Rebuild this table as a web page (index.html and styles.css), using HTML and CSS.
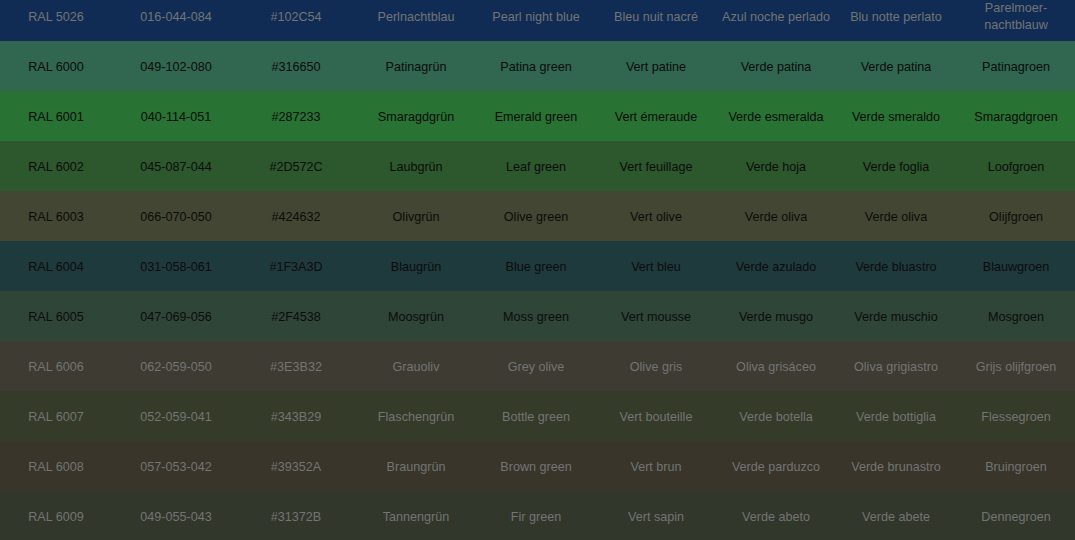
FILE: index.html
```html
<!DOCTYPE html>
<html>
<head>
<meta charset="utf-8">
<link rel="stylesheet" href="styles.css">
</head>
<body>
<div class="wrap">
<table class="ral">
<tbody>
<tr class="r5026 dim"><td>RAL 5026</td><td>016-044-084</td><td>#102C54</td><td>Perlnachtblau</td><td>Pearl night blue</td><td>Bleu nuit nacré</td><td>Azul noche perlado</td><td>Blu notte perlato</td><td>Parelmoer-nachtblauw</td></tr>
<tr class="r6000"><td>RAL 6000</td><td>049-102-080</td><td>#316650</td><td>Patinagrün</td><td>Patina green</td><td>Vert patine</td><td>Verde patina</td><td>Verde patina</td><td>Patinagroen</td></tr>
<tr class="r6001"><td>RAL 6001</td><td>040-114-051</td><td>#287233</td><td>Smaragdgrün</td><td>Emerald green</td><td>Vert émeraude</td><td>Verde esmeralda</td><td>Verde smeraldo</td><td>Smaragdgroen</td></tr>
<tr class="r6002"><td>RAL 6002</td><td>045-087-044</td><td>#2D572C</td><td>Laubgrün</td><td>Leaf green</td><td>Vert feuillage</td><td>Verde hoja</td><td>Verde foglia</td><td>Loofgroen</td></tr>
<tr class="r6003"><td>RAL 6003</td><td>066-070-050</td><td>#424632</td><td>Olivgrün</td><td>Olive green</td><td>Vert olive</td><td>Verde oliva</td><td>Verde oliva</td><td>Olijfgroen</td></tr>
<tr class="r6004"><td>RAL 6004</td><td>031-058-061</td><td>#1F3A3D</td><td>Blaugrün</td><td>Blue green</td><td>Vert bleu</td><td>Verde azulado</td><td>Verde bluastro</td><td>Blauwgroen</td></tr>
<tr class="r6005"><td>RAL 6005</td><td>047-069-056</td><td>#2F4538</td><td>Moosgrün</td><td>Moss green</td><td>Vert mousse</td><td>Verde musgo</td><td>Verde muschio</td><td>Mosgroen</td></tr>
<tr class="r6006 dim"><td>RAL 6006</td><td>062-059-050</td><td>#3E3B32</td><td>Grauoliv</td><td>Grey olive</td><td>Olive gris</td><td>Oliva grisáceo</td><td>Oliva grigiastro</td><td>Grijs olijfgroen</td></tr>
<tr class="r6007 dim"><td>RAL 6007</td><td>052-059-041</td><td>#343B29</td><td>Flaschengrün</td><td>Bottle green</td><td>Vert bouteille</td><td>Verde botella</td><td>Verde bottiglia</td><td>Flessegroen</td></tr>
<tr class="r6008 dim"><td>RAL 6008</td><td>057-053-042</td><td>#39352A</td><td>Braungrün</td><td>Brown green</td><td>Vert brun</td><td>Verde parduzco</td><td>Verde brunastro</td><td>Bruingroen</td></tr>
<tr class="r6009 dim"><td>RAL 6009</td><td>049-055-043</td><td>#31372B</td><td>Tannengrün</td><td>Fir green</td><td>Vert sapin</td><td>Verde abeto</td><td>Verde abete</td><td>Dennegroen</td></tr>
</tbody>
</table>
</div>
</body>
</html>
```
FILE: styles.css
```css
html, body {
  margin: 0;
  padding: 0;
  background: #31372B;
  overflow: hidden;
}
.wrap {
  margin-top: -9px;
  margin-left: -4px;
  width: 1080px;
}
.ral {
  width: 100%;
  border-collapse: collapse;
  table-layout: fixed;
  font-family: "Liberation Sans", Arial, sans-serif;
  font-size: 12.6px;
  color: #0c0c0c;
}
.ral td {
  height: 48px;
  padding: 2px 1px 0;
  text-align: center;
  vertical-align: middle;
  line-height: 17px;
}
.ral tr.dim { color: #747474; }
.r5026 { background: #102C54; }
.r6000 { background: #316650; }
.r6001 { background: #287233; }
.r6002 { background: #2D572C; }
.r6003 { background: #424632; }
.r6004 { background: #1F3A3D; }
.r6005 { background: #2F4538; }
.r6006 { background: #3E3B32; }
.r6007 { background: #343B29; }
.r6008 { background: #39352A; }
.r6009 { background: #31372B; }
```
